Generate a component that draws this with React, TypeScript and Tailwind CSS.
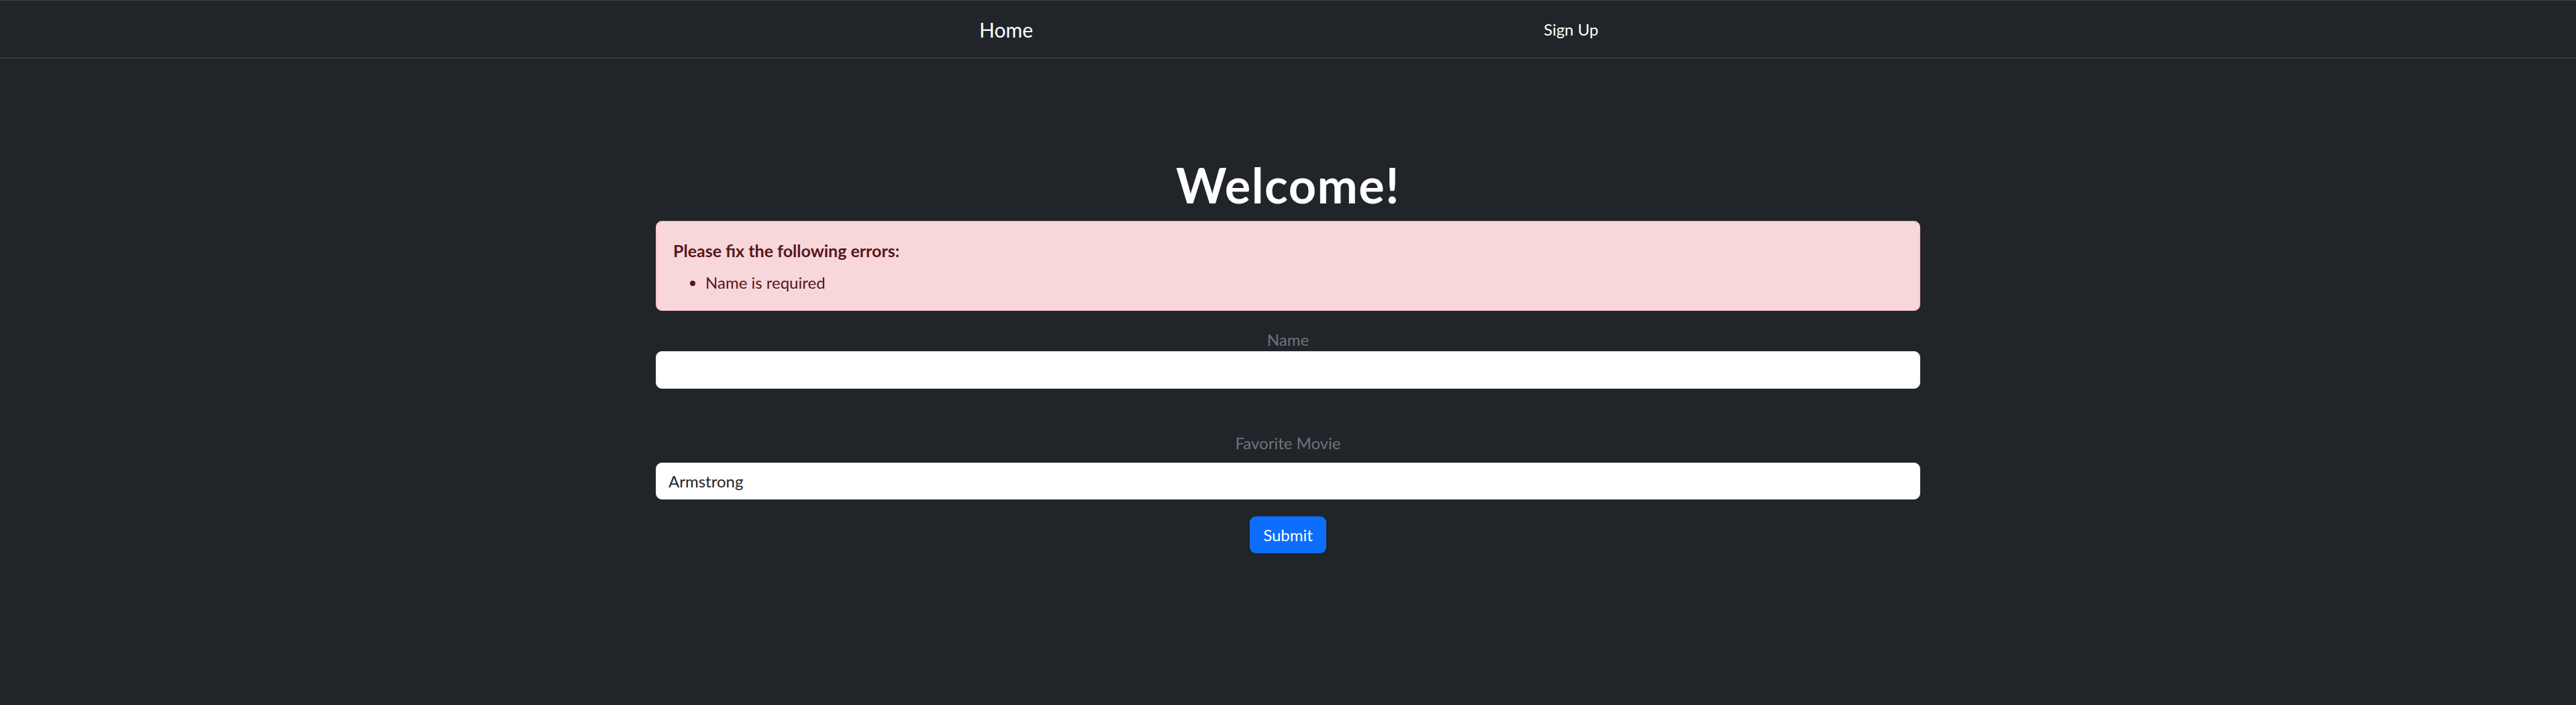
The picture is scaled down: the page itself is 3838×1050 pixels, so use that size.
import React from "react";

export default function App() {
  return (
    <div className="min-h-[1050px] w-full bg-[#212529] text-white" style={{ fontFamily: "Lato, 'Open Sans', sans-serif" }}>
      <nav className="flex h-[87px] items-start border-t border-b border-t-[#3d3f44] border-b-[#4b4e53] bg-[#212529] pl-[1459px]">
        <a className="mt-[21px] text-[30px] leading-[45px] text-white">Home</a>
        <a className="ml-[761px] mt-[25px] text-[24px] leading-[36px] text-white">Sign Up</a>
      </nav>
      <main className="mx-auto flex w-[1884px] flex-col items-center">
        <h1 className="mt-[146px] text-[72px] font-bold leading-[84px] tracking-[1.5px] text-white">Welcome!</h1>
        <div className="mt-[12px] w-full rounded-[9px] border border-[#f1aeb5] bg-[#f8d7da] px-[25px] pt-[25px] pb-[23px] text-[#58151c]">
          <p className="text-[25px] font-bold leading-[36px]">Please fix the following errors:</p>
          <ul className="mt-[12px] list-disc pl-[48px] text-[24px] leading-[36px]">
            <li>Name is required</li>
          </ul>
        </div>
        <label className="mt-[25px] text-[24px] leading-[35px] text-[#6c757d]">Name</label>
        <input
          className="h-[56px] w-full rounded-[9px] border border-[#dee2e6] bg-white px-[18px] text-[24px] text-[#212529] outline-none"
          defaultValue=""
        />
        <label className="mt-[63px] text-[24px] leading-[36px] text-[#6c757d]">Favorite Movie</label>
        <input
          className="mt-[11px] h-[55px] w-full rounded-[9px] border border-[#dee2e6] bg-white px-[18px] text-[24px] text-[#212529] outline-none"
          defaultValue="Armstrong"
        />
        <button className="mt-[25px] h-[55px] w-[114px] rounded-[9px] bg-[#0d6efd] text-[24px] leading-[36px] text-white">
          Submit
        </button>
      </main>
    </div>
  );
}
